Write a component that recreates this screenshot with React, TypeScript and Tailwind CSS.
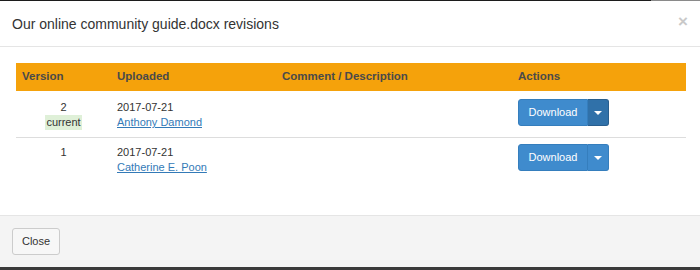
const revisions = [
  { version: 2, current: true, date: '2017-07-21', author: 'Anthony Damond', active: true },
  { version: 1, current: false, date: '2017-07-21', author: 'Catherine E. Poon', active: false },
];

function DownloadButton({ active }: { active: boolean }) {
  return (
    <div className="flex h-[27px]">
      <button className="w-[70px] rounded-l-[3px] border border-[#357ebd] bg-[#3f8bcd] text-[11px] text-white">
        Download
      </button>
      <button
        className={
          active
            ? 'flex w-[21px] items-center justify-center rounded-r-[3px] border border-l-0 border-[#285e8e] bg-[#3071a9]'
            : 'flex w-[21px] items-center justify-center rounded-r-[3px] border border-l-0 border-[#357ebd] bg-[#3f8bcd]'
        }
      >
        <span className="h-0 w-0 border-x-[4px] border-t-[4px] border-x-transparent border-t-white" />
      </button>
    </div>
  );
}

export default function App() {
  return (
    <div className="flex h-[270px] w-[700px] flex-col bg-white text-[11px] text-[#333] [font-family:'Liberation_Sans',Arial,sans-serif]">
      {/* top edge */}
      <div className="flex h-px">
        <div className="w-[651px] bg-[#1c1c1c]" />
        <div className="flex-1 bg-[#8a8a8a]" />
      </div>

      {/* Modal header */}
      <div className="flex h-[46px] items-center justify-between border-b border-[#e5e5e5] pl-3 pr-[12px]">
        <h4 className="pt-px text-[14px] text-[#333]">Our online community guide.docx revisions</h4>
        <span className="-mt-[5px] text-[17px] font-bold leading-none text-[#c9c9c9]">×</span>
      </div>

      {/* Modal body */}
      <div className="h-[168px] pl-4 pr-[14px] pt-4">
        <div className="grid grid-cols-[95px_165px_236px_174px]">
          <div className="flex h-[28px] items-center bg-[#f5a20b] pl-[6px] text-[11.5px] font-bold text-[#4a4a4a]">Version</div>
          <div className="flex h-[28px] items-center bg-[#f5a20b] pl-[6px] text-[11.5px] font-bold text-[#4a4a4a]">Uploaded</div>
          <div className="flex h-[28px] items-center bg-[#f5a20b] pl-[6px] text-[11.5px] font-bold text-[#4a4a4a]">Comment / Description</div>
          <div className="flex h-[28px] items-center bg-[#f5a20b] pl-[6px] text-[11.5px] font-bold text-[#4a4a4a]">Actions</div>

          {revisions.map((r, i) => (
            <div
              key={r.version}
              className={
                i === 0
                  ? 'col-span-4 grid h-[47px] grid-cols-[95px_165px_236px_174px] border-b border-[#dddddd] pt-2'
                  : 'col-span-4 grid h-[46px] grid-cols-[95px_165px_236px_174px] pt-[6px]'
              }
            >
              <div className="flex flex-col items-center pt-px leading-[15px]">
                <span>{r.version}</span>
                {r.current && <span className="bg-[#dff0d8] px-px">current</span>}
              </div>
              <div className="flex flex-col items-start pl-[6px] pt-px leading-[15px]">
                <span>{r.date}</span>
                <a href="#" className="text-[#337ab7] underline">
                  {r.author}
                </a>
              </div>
              <div />
              <div className="pl-[6px]">
                <DownloadButton active={r.active} />
              </div>
            </div>
          ))}
        </div>
      </div>

      {/* Modal footer */}
      <div className="flex h-[52px] items-center border-t border-[#e5e5e5] bg-[#f4f4f4] px-3">
        <button className="h-[27px] w-[48px] rounded-[3px] border border-[#cccccc] bg-[#f7f7f7] text-[11px] text-[#333]">
          Close
        </button>
      </div>

      <div className="h-[3px] bg-[#3a3a3a]" />
    </div>
  );
}
